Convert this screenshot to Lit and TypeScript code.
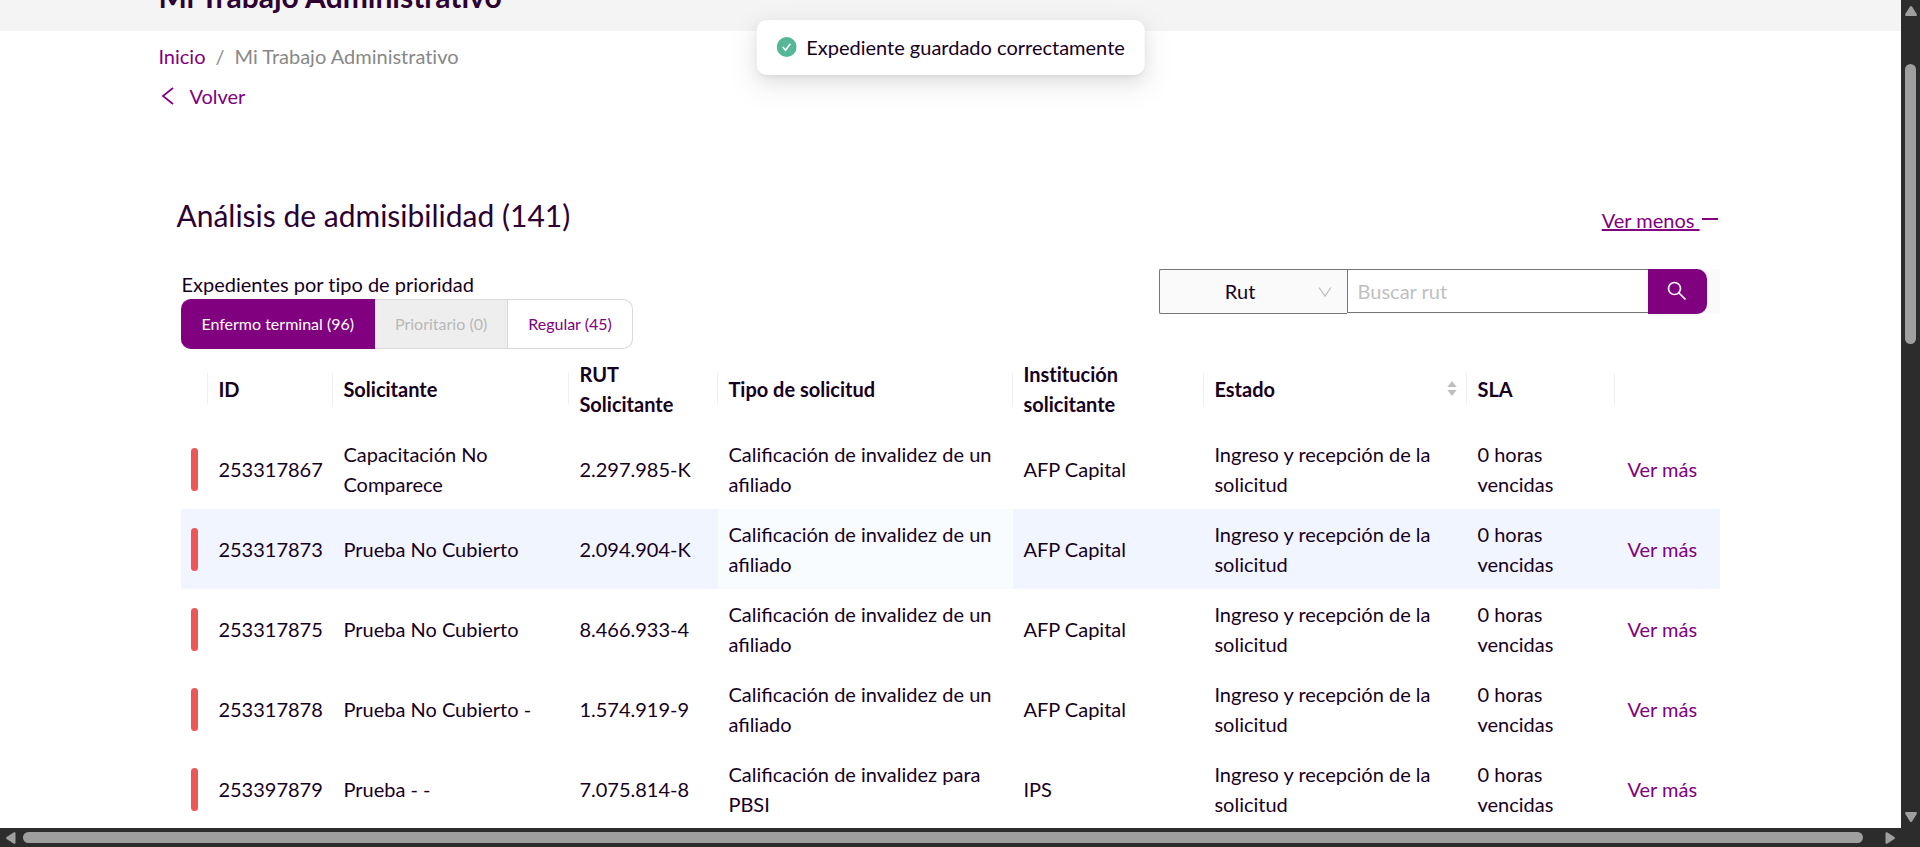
import { LitElement, html, css } from "lit";
import { customElement, property } from "lit/decorators.js";
import { classMap } from "lit/directives/class-map.js";

interface Expediente {
  id: string;
  solicitante: string;
  rut: string;
  tipo: string;
  institucion: string;
  hover?: boolean;
}

const AFILIADO = "Calificación de invalidez de un afiliado";

const EXPEDIENTES: Expediente[] = [
  { id: "253317867", solicitante: "Capacitación No Comparece", rut: "2.297.985-K", tipo: AFILIADO, institucion: "AFP Capital" },
  { id: "253317873", solicitante: "Prueba No Cubierto", rut: "2.094.904-K", tipo: AFILIADO, institucion: "AFP Capital", hover: true },
  { id: "253317875", solicitante: "Prueba No Cubierto", rut: "8.466.933-4", tipo: AFILIADO, institucion: "AFP Capital" },
  { id: "253317878", solicitante: "Prueba No Cubierto -", rut: "1.574.919-9", tipo: AFILIADO, institucion: "AFP Capital" },
  { id: "253397879", solicitante: "Prueba - -", rut: "7.075.814-8", tipo: "Calificación de invalidez para PBSI", institucion: "IPS" },
];

@customElement("expedientes-table")
export class ExpedientesTable extends LitElement {
  @property({ attribute: false }) rows: Expediente[] = [];

  static styles = css`
    :host {
      display: block;
      font-size: 20px;
      line-height: 30px;
      color: #17001e;
    }
    table {
      width: 100%;
      table-layout: fixed;
      border-collapse: separate;
      border-spacing: 0;
    }
    .c-mark { width: 27px; }
    .c-id { width: 125px; }
    .c-name { width: 236px; }
    .c-rut { width: 149px; }
    .c-type { width: 295px; }
    .c-inst { width: 191px; }
    .c-state { width: 263px; }
    .c-sla { width: 148px; }
    .c-more { width: 105px; }
    th,
    td {
      box-sizing: border-box;
      height: 80px;
      padding: 10px;
      text-align: left;
      vertical-align: middle;
    }
    th {
      font-weight: 700;
      background: linear-gradient(#f0f0f0, #f0f0f0) right center / 1px 32px no-repeat;
    }
    th:last-child {
      background: none;
    }
    .c-num {
      padding-right: 0;
    }
    .mark-cell {
      padding-right: 0;
    }
    .mark {
      width: 7px;
      height: 43px;
      border-radius: 4px;
      background: #eb5757;
    }
    .hover td {
      background: #f0f5ff;
    }
    .hover .sorted {
      background: #f8fcff;
    }
    .sorted {
      font-variant-ligatures: normal;
    }
    .sorter {
      display: flex;
      align-items: center;
      justify-content: space-between;
    }
    .sorter svg {
      display: block;
    }
    a {
      color: #800080;
      text-decoration: none;
    }
    .more-cell {
      padding-left: 12px;
    }
  `;

  render() {
    return html`
      <table>
        <colgroup>
          <col class="c-mark" /><col class="c-id" /><col class="c-name" /><col class="c-rut" /><col class="c-type" />
          <col class="c-inst" /><col class="c-state" /><col class="c-sla" /><col class="c-more" />
        </colgroup>
        <thead>
          <tr>
            <th></th>
            <th scope="col">ID</th>
            <th scope="col">Solicitante</th>
            <th scope="col">RUT Solicitante</th>
            <th scope="col">Tipo de solicitud</th>
            <th scope="col">Institución solicitante</th>
            <th scope="col">
              <div class="sorter">
                <span>Estado</span>
                <svg width="10" height="16" viewBox="0 0 10 16" fill="#bfbfbf" aria-hidden="true">
                  <path d="M5 0 9.700 6H.3z" />
                  <path d="M5 15 .3 9h9.400z" />
                </svg>
              </div>
            </th>
            <th scope="col">SLA</th>
            <th></th>
          </tr>
        </thead>
        <tbody>
          ${this.rows.map(
            (r) => html`
              <tr class=${classMap({ hover: !!r.hover })}>
                <td class="mark-cell"><div class="mark"></div></td>
                <td class="c-num">${r.id}</td>
                <td>${r.solicitante}</td>
                <td>${r.rut}</td>
                <td class="sorted">${r.tipo}</td>
                <td>${r.institucion}</td>
                <td>Ingreso y recepción de la solicitud</td>
                <td>0 horas vencidas</td>
                <td class="more-cell"><a href="#">Ver más</a></td>
              </tr>
            `
          )}
        </tbody>
      </table>
    `;
  }
}

@customElement("scroll-rail")
export class ScrollRail extends LitElement {
  @property({ reflect: true }) axis: "x" | "y" = "y";

  static styles = css`
    :host {
      display: flex;
      align-items: center;
      background: #2c2c2c;
    }
    :host([axis="y"]) {
      flex-direction: column;
      padding: 5px 0;
    }
    :host([axis="x"]) {
      padding: 0 5px;
    }
    svg {
      flex: none;
      display: block;
    }
    .track {
      flex: 1;
      display: flex;
    }
    :host([axis="y"]) .track {
      flex-direction: column;
      width: 11px;
      padding: 47px 0;
    }
    :host([axis="x"]) .track {
      height: 11px;
      padding: 0 21px 0 6px;
    }
    .thumb {
      border-radius: 6px;
      background: #9f9f9f;
    }
    :host([axis="y"]) .thumb {
      height: 40%;
    }
    :host([axis="x"]) .thumb {
      flex: 1;
    }
  `;

  render() {
    const y = this.axis === "y";
    return html`
      <svg width="12" height="12" viewBox="0 0 12 12" fill="#9f9f9f" aria-hidden="true">
        <path d=${y ? "M5 1.600Q6 .4 7 1.600L11.700 9Q12.200 11 11 11H1Q-.2 11 .3 9z" : "M1.600 5Q.4 6 1.600 7L9 11.700Q10.500 12 10.500 11V1Q10.500 0 9 .3z"} />
      </svg>
      <div class="track"><div class="thumb"></div></div>
      <svg width="12" height="12" viewBox="0 0 12 12" fill="#9f9f9f" aria-hidden="true">
        <path d=${y ? "M5 10.400Q6 11.600 7 10.400L11.700 3Q12.200 1 11 1H1Q-.2 1 .3 3z" : "M10.400 5Q11.600 6 10.400 7L3 11.700Q1.500 12 1.500 11V1Q1.500 0 3 .3z"} />
      </svg>
    `;
  }
}

@customElement("app-root")
export class AppRoot extends LitElement {
  static styles = css`
    :host {
      display: grid;
      grid-template-columns: minmax(0, 1fr) 19px;
      grid-template-rows: minmax(0, 1fr) 19px;
      height: 100vh;
      overflow: hidden;
      background: #2c2c2c;
      color: #17001e;
      font-family: Lato, "Liberation Sans", sans-serif;
      font-size: 20px;
      line-height: 30px;
      font-variant-ligatures: none;
    }
    .page {
      position: relative;
      overflow: hidden;
      background: #fff;
    }
    .banner {
      display: flex;
      align-items: flex-end;
      height: 31px;
      padding: 0 calc(100% / 12);
      overflow: hidden;
      background: #f4f4f4;
    }
    h1 {
      margin: 0;
      padding-bottom: 15px;
      font-size: 30px;
      line-height: 40px;
      font-weight: 700;
      color: #2d0031;
    }
    .content {
      padding: 10px calc(100% / 12) 0;
    }
    a {
      color: #800080;
      text-decoration: none;
    }
    .crumbs {
      display: flex;
      gap: 10px;
      color: #888;
    }
    .back {
      display: inline-flex;
      align-items: center;
      gap: 14px;
      margin-top: 10px;
    }
    .back svg {
      display: block;
    }
    .section {
      padding: 80px 0 0 18px;
    }
    .section-head {
      display: flex;
      align-items: center;
      justify-content: space-between;
      padding-right: 25px;
    }
    h2 {
      margin: 0;
      font-size: 30px;
      line-height: 45px;
      font-weight: 400;
      color: #2d0031;
    }
    .toggle {
      display: flex;
      align-items: center;
      gap: 2px;
      padding-top: 8px;
    }
    .toggle span {
      text-decoration: underline;
      text-decoration-thickness: 2px;
      white-space: pre;
    }
    .panel {
      padding: 31px 23px 0 5px;
    }
    .filters {
      display: flex;
      align-items: flex-start;
      justify-content: space-between;
    }
    .label {
      display: block;
      line-height: 30px;
    }
    .group {
      display: flex;
      height: 50px;
    }
    .group button {
      box-sizing: border-box;
      padding: 0 20px;
      border: 1px solid #d9d9d9;
      border-left-width: 0;
      background: #fff;
      color: #800080;
      font: 400 16px/24px Lato, sans-serif;
      font-variant-ligatures: none;
    }
    .group .active {
      border-color: #800080;
      border-radius: 10px 0 0 10px;
      background: #800080;
      color: #fff;
    }
    .group button:disabled {
      background: #eee;
      color: #b8b8b8;
    }
    .group button:last-child {
      border-radius: 0 10px 10px 0;
    }
    .search {
      display: flex;
      align-items: flex-start;
      background: #fafafa;
      padding-right: 13px;
    }
    .picker {
      display: grid;
      align-items: center;
    }
    .picker > * {
      grid-area: 1 / 1;
    }
    .picker svg {
      justify-self: end;
      margin-right: 15px;
      pointer-events: none;
    }
    select {
      box-sizing: border-box;
      width: 188px;
      height: 45px;
      padding: 0 26px 2px 0;
      appearance: none;
      border: 1px solid #757575;
      border-right: 0;
      border-radius: 2px 0 0 2px;
      background: #fafafa;
      color: #17001e;
      font: 400 20px/30px Lato, sans-serif;
      text-align: center;
      text-align-last: center;
    }
    input {
      box-sizing: border-box;
      width: 301px;
      height: 44px;
      padding: 0 10px;
      border: 1px solid #757575;
      border-right: 0;
      border-radius: 0;
      background: #fff;
      color: #17001e;
      font: 400 20px/30px Lato, sans-serif;
    }
    input::placeholder {
      color: #bfbfbf;
    }
    .go {
      display: grid;
      place-items: center;
      width: 59px;
      height: 45px;
      padding: 0 0 2px;
      border: 0;
      border-radius: 0 10px 10px 0;
      background: #800080;
      box-shadow: 0 2px 0 rgba(0, 0, 0, 0.04);
    }
    .toast {
      position: absolute;
      top: 20px;
      left: 50%;
      transform: translateX(-50%);
      display: flex;
      align-items: center;
      gap: 10px;
      padding: 12px 20px 13px;
      border-radius: 10px;
      background: #fff;
      box-shadow: 0 6px 16px rgba(0, 0, 0, 0.08), 0 3px 6px -4px rgba(0, 0, 0, 0.12), 0 9px 28px 8px rgba(0, 0, 0, 0.05);
      white-space: nowrap;
    }
    .corner {
      background: #2c2c2c;
    }
  `;

  render() {
    return html`
      <main class="page">
        <header class="banner"><h1>Mi Trabajo Administrativo</h1></header>
        <div class="content">
          <nav class="crumbs" aria-label="Ruta">
            <a href="#">Inicio</a><span>/</span><span>Mi Trabajo Administrativo</span>
          </nav>
          <a class="back" href="#">
            <svg width="17" height="20" viewBox="0 0 17 20" fill="none" stroke="#800080" stroke-width="1.700" aria-hidden="true">
              <path d="M15 2 5 10l10 8" />
            </svg>
            Volver
          </a>
          <section class="section">
            <div class="section-head">
              <h2>Análisis de admisibilidad (141)</h2>
              <a class="toggle" href="#">
                <span>Ver menos </span>
                <svg width="16" height="20" viewBox="0 0 16 20" aria-hidden="true"><path fill="#800080" d="M0 8h16v2H0z" /></svg>
              </a>
            </div>
            <div class="panel">
              <div class="filters">
                <div>
                  <span class="label" id="prioridad">Expedientes por tipo de prioridad</span>
                  <div class="group" role="group" aria-labelledby="prioridad">
                    <button class="active">Enfermo terminal (96)</button>
                    <button disabled>Prioritario (0)</button>
                    <button>Regular (45)</button>
                  </div>
                </div>
                <form class="search" role="search">
                  <div class="picker">
                    <select aria-label="Buscar por">
                      <option>Rut</option>
                    </select>
                    <svg width="14" height="12" viewBox="0 0 14 12" fill="none" stroke="#bfbfbf" stroke-width="1.300" aria-hidden="true">
                      <path d="M1 1.500 7 10l6-8.500" />
                    </svg>
                  </div>
                  <input type="text" placeholder="Buscar rut" aria-label="Buscar rut" />
                  <button class="go" type="button" aria-label="Buscar">
                    <svg width="20" height="20" viewBox="0 0 20 20" fill="none" stroke="#fff" stroke-width="1.700" aria-hidden="true">
                      <circle cx="7.500" cy="7.500" r="6" />
                      <path d="m12 12 6.500 6.500" />
                    </svg>
                  </button>
                </form>
              </div>
              <expedientes-table .rows=${EXPEDIENTES}></expedientes-table>
            </div>
          </section>
        </div>
        <div class="toast" role="status">
          <svg width="20" height="20" viewBox="0 0 20 20" aria-hidden="true">
            <circle cx="10" cy="10" r="10" fill="#55b798" />
            <path d="m6.200 10 2.600 3.200 4.900-6.400" fill="none" stroke="#fff" stroke-width="1.600" />
          </svg>
          <span>Expediente guardado correctamente</span>
        </div>
      </main>
      <scroll-rail axis="y"></scroll-rail>
      <scroll-rail axis="x"></scroll-rail>
      <div class="corner"></div>
    `;
  }
}
